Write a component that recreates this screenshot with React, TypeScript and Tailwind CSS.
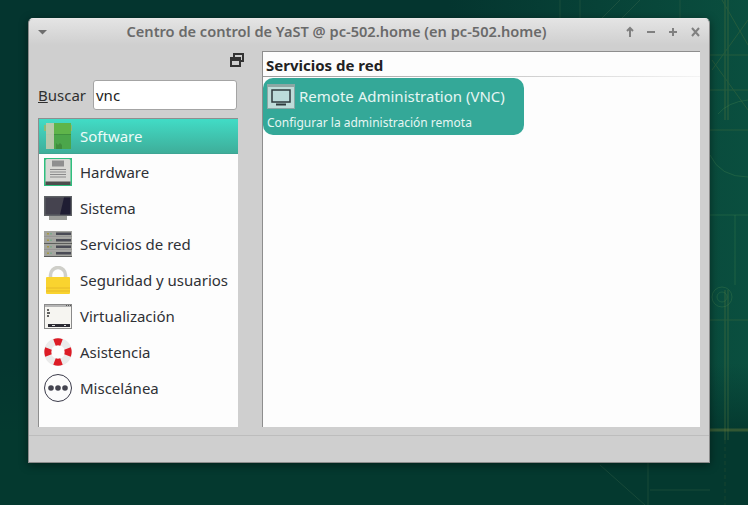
const font = { fontFamily: '"Noto Sans", sans-serif' };

function SoftwareIcon() {
  return (
    <svg width="28" height="28" viewBox="0 0 28 28">
      <path d="M0 3h28v6H0z" fill="#8cbb7a" />
      <rect x="2" y="1" width="25" height="26" fill="#5fb54a" />
      <rect x="2" y="13" width="25" height="14" fill="#4ba64a" />
      <rect x="2" y="12" width="25" height="1" fill="#3f923f" />
      <rect x="2" y="1" width="8" height="26" fill="#c6ccb8" opacity="0.88" />
      <path d="M12 27v-6l2 2 2-2 2 2v4z" fill="#3f8d3d" />
    </svg>
  );
}

function HardwareIcon() {
  return (
    <svg width="28" height="28" viewBox="0 0 28 28">
      <rect x="0" y="0" width="28" height="28" fill="#2fbf7e" />
      <rect x="1.5" y="1" width="25" height="26" rx="1.5" fill="#d8d8d4" />
      <rect x="8" y="2.5" width="12" height="6" fill="#8f8f8f" />
      <path d="M6 11.5h16M6 14h16M6 16.5h16M6 19h16" stroke="#8a8a8a" strokeWidth="1" />
      <rect x="1.5" y="23.5" width="25" height="3.5" fill="#4d4d4d" />
    </svg>
  );
}

function SistemaIcon() {
  return (
    <svg width="28" height="25" viewBox="0 0 28 25">
      <rect x="0" y="0" width="28" height="20" fill="#5f6266" />
      <rect x="1.5" y="1.5" width="25" height="17" fill="#45434f" />
      <path d="M20 1.5h6.5v17H16z" fill="#1f1d33" />
      <rect x="5" y="20" width="18" height="4" fill="#9a9c98" />
    </svg>
  );
}

function ServerIcon() {
  const rows = [0, 6.5, 13, 19.5];
  return (
    <svg width="28" height="26" viewBox="0 0 28 26">
      {rows.map((y) => (
        <g key={y}>
          <rect x="0" y={y} width="28" height="5.5" fill="#a3a49f" />
          <rect x="0" y={y + 5.5} width="28" height="1" fill="#5c5d5b" />
          <rect x="3" y={y + 2} width="2" height="1.5" fill="#a89a45" />
          <rect x="6" y={y + 2} width="2" height="1.5" fill="#7fa78e" />
          <rect x="12" y={y + 1.5} width="15" height="2.5" fill="#4a4b55" />
        </g>
      ))}
    </svg>
  );
}

function LockIcon() {
  return (
    <svg width="28" height="29" viewBox="0 0 28 29">
      <path d="M6.5 12V9a7.5 7.5 0 0 1 15 0v3" fill="none" stroke="#cfcfc9" strokeWidth="3.5" />
      <rect x="2" y="11" width="24" height="17" rx="1" fill="#f9d32f" />
      <path d="M2 22h24M2 25h24" stroke="#e6b92b" strokeWidth="1" />
    </svg>
  );
}

function VirtIcon() {
  return (
    <svg width="28" height="25" viewBox="0 0 28 25">
      <rect x="0.5" y="0.5" width="27" height="24" fill="#f6f5f1" stroke="#8a8a8a" />
      <rect x="1" y="1" width="26" height="2" fill="#b5b5b5" />
      <path d="M22 1.5h1M24 1.5h1M26 1.5h1" stroke="#555" />
      <path d="M3 6h2M3 9h3M3 12h2" stroke="#333" strokeWidth="1.4" />
      <rect x="4" y="20" width="22" height="3" fill="#2b2b33" />
      <path d="M8 21.5h3M20 21.5h2" stroke="#ddd" />
    </svg>
  );
}

function LifebuoyIcon() {
  return (
    <svg width="28" height="28" viewBox="0 0 28 28">
      <circle cx="14" cy="14" r="10.5" fill="none" stroke="#ebebeb" strokeWidth="7" />
      <path
        d="M10.5 4.5a10 10 0 0 1 7 0M23.5 10.5a10 10 0 0 1 0 7M17.5 23.5a10 10 0 0 1-7 0M4.5 17.5a10 10 0 0 1 0-7"
        fill="none"
        stroke="#dd1c26"
        strokeWidth="7"
      />
    </svg>
  );
}

function MoreIcon() {
  return (
    <svg width="28" height="28" viewBox="0 0 28 28">
      <circle cx="14" cy="14" r="13.5" fill="#fcfcfc" stroke="#3b3b4a" />
      <circle cx="7" cy="14" r="2.8" fill="#44444f" />
      <circle cx="14" cy="14" r="2.8" fill="#44444f" />
      <circle cx="21" cy="14" r="2.8" fill="#44444f" />
    </svg>
  );
}

function Wallpaper() {
  return (
    <svg className="absolute inset-0" width="748" height="505" viewBox="0 0 748 505">
      <defs>
        <linearGradient id="wall" x1="0" y1="0" x2="1" y2="0">
          <stop offset="0" stopColor="#04352f" />
          <stop offset="0.6" stopColor="#04352f" />
          <stop offset="1" stopColor="#0a4f3f" />
        </linearGradient>
        <linearGradient id="fade" x1="0" y1="0" x2="0" y2="1">
          <stop offset="0.72" stopColor="#04392f" stopOpacity="0" />
          <stop offset="0.86" stopColor="#04392f" />
        </linearGradient>
      </defs>
      <rect width="748" height="505" fill="url(#wall)" />
      <rect width="748" height="505" fill="url(#fade)" />
      <g stroke="#56763c" fill="none" opacity="0.35">
        <path d="M725 0v120M728 0v120M725 290v150M728 290v150" strokeWidth="1.5" />
        <path d="M710 55h38M710 90h38M710 130h38M710 320h38" />
        <path d="M722 0l26 45M712 60l36 50M748 20l-36 50" />
      </g>
      <g stroke="#4d8a50" fill="none" opacity="0.3">
        <path d="M710 155q10 22 38 22M748 100q-20 2-30 14M710 215h38M735 215v70" />
        <circle cx="722" cy="297" r="10" />
        <circle cx="722" cy="297" r="5" />
      </g>
      <g stroke="#6a7a38" fill="none" opacity="0.45">
        <path d="M710 430h38" strokeWidth="3" />
        <path d="M725 440v65" strokeDasharray="4 3" opacity="0.4" />
      </g>
      <g stroke="#3f6a4c" fill="none" opacity="0.35">
        <path d="M648 462v43M650 490h60M600 465l45 40" />
        <path d="M560 0v20M580 0v20M620 0l-20 20M640 0l-20 20M680 0v20" />
      </g>
    </svg>
  );
}

const categories = [
  { name: "Software", icon: <SoftwareIcon />, active: true },
  { name: "Hardware", icon: <HardwareIcon /> },
  { name: "Sistema", icon: <SistemaIcon /> },
  { name: "Servicios de red", icon: <ServerIcon /> },
  { name: "Seguridad y usuarios", icon: <LockIcon /> },
  { name: "Virtualización", icon: <VirtIcon /> },
  { name: "Asistencia", icon: <LifebuoyIcon /> },
  { name: "Miscelánea", icon: <MoreIcon /> },
];

function TitleBar() {
  return (
    <div className="flex h-[26px] shrink-0 items-center justify-between rounded-t-[5px] bg-gradient-to-b from-[#e4e4e4] to-[#cfcfcf] pl-[5px] pr-[7px]">
      <svg width="18" height="10" viewBox="0 0 18 10">
        <path d="M4 3h9l-4.5 4.5z" fill="#6e6e6e" />
      </svg>
      <span className="mr-[5px] text-[14.6px] font-semibold text-[#6a6a6a]">
        Centro de control de YaST @ pc-502.home (en pc-502.home)
      </span>
      <svg width="76" height="12" viewBox="0 0 76 12" stroke="#808080" strokeWidth="2" fill="none">
        <path d="M4 11V2M1 5 4 2l3 3" />
        <path d="M21 6h8" />
        <path d="M43 6h8M47 2v8" />
        <path d="M66 2l7 8M73 2l-7 8" />
      </svg>
    </div>
  );
}

function Sidebar() {
  return (
    <div className="flex w-[200px] shrink-0 flex-col">
      <div className="flex h-[22px] justify-end">
        <svg className="mr-[-6px] mt-[2px]" width="14" height="15" viewBox="0 0 14 15" fill="none" stroke="#333" strokeWidth="2">
          <path d="M4 4V1h9v7h-3" />
          <rect x="1" y="5" width="9" height="8" />
          <path d="M1 7h9" />
        </svg>
      </div>
      <div className="mt-[7px] flex h-[30px] items-center">
        <span className="w-[55px] text-[15px] text-[#2f2f2f]">
          <span className="underline">B</span>uscar
        </span>
        <div className="flex h-[30px] w-[144px] items-center rounded-[3px] border border-[#a4a4a4] bg-white pl-[2px] text-[15px] text-[#222]">
          vnc
        </div>
      </div>
      <div className="mt-[8px] flex h-[309px] flex-col border-l border-t border-[#8e8e8e] bg-[#fdfdfd]">
        {categories.map((c) => (
          <div
            key={c.name}
            className={
              c.active
                ? "flex h-[35px] items-center border-b border-[#3ea594] bg-gradient-to-b from-[#41dcc6] to-[#3eae9a] text-[#ecfbf8]"
                : "flex h-[36px] items-center text-[#2f3136]"
            }
          >
            <span className="flex w-[41px] shrink-0 justify-start pl-[5px]">{c.icon}</span>
            <span className="text-[15px]">{c.name}</span>
          </div>
        ))}
      </div>
    </div>
  );
}

function MainPane() {
  return (
    <div className="flex h-[376px] w-[438px] flex-col border-l border-t border-[#8e8e8e] bg-[#fdfdfd]">
      <div className="flex h-[24px] items-end pl-[3px] text-[15px] leading-[22px] font-bold text-[#222]">Servicios de red</div>
      <div className="h-px bg-gradient-to-r from-[#9a9a9a] to-[#f4f4f4]" />
      <div className="mt-[1px] flex h-[57px] w-[261px] flex-col rounded-[10px] bg-[#34a898] pl-[4px] text-[#e6f6f3]">
        <div className="mt-[5px] flex h-[26px] items-center">
          <svg width="28" height="25" viewBox="0 0 28 25">
            <rect width="28" height="25" fill="#bfdcd9" />
            <rect x="0.5" y="0.5" width="27" height="24" fill="none" stroke="#8aa8a5" />
            <rect x="1" y="1" width="26" height="2" fill="#8fa6a3" />
            <rect x="5" y="6" width="18" height="12" fill="#bcdcda" stroke="#2e3a3c" strokeWidth="1.5" />
            <rect x="9" y="19.5" width="10" height="2" fill="#2e3a3c" />
          </svg>
          <span className="ml-[4px] text-[15px]">Remote Administration (VNC)</span>
        </div>
        <div className="mt-[6px] text-[12px] leading-[16px]">Configurar la administración remota</div>
      </div>
    </div>
  );
}

export default function App() {
  return (
    <div className="relative h-[505px] w-[748px] overflow-hidden" style={font}>
      <Wallpaper />
      <div className="absolute left-[28px] top-[18px] flex h-[445px] w-[682px] flex-col rounded-t-[5px] border border-[#8c8c8c] border-t-[#e8e8e8] bg-[#cfcfcf] shadow-[0_2px_10px_rgba(0,0,0,0.45)]">
        <TitleBar />
        <div className="flex flex-1 gap-[24px] pl-[9px] pt-[6px]">
          <Sidebar />
          <MainPane />
        </div>
        <div className="h-[27px] shrink-0 border-t border-[#bdbdbd]" />
      </div>
    </div>
  );
}
